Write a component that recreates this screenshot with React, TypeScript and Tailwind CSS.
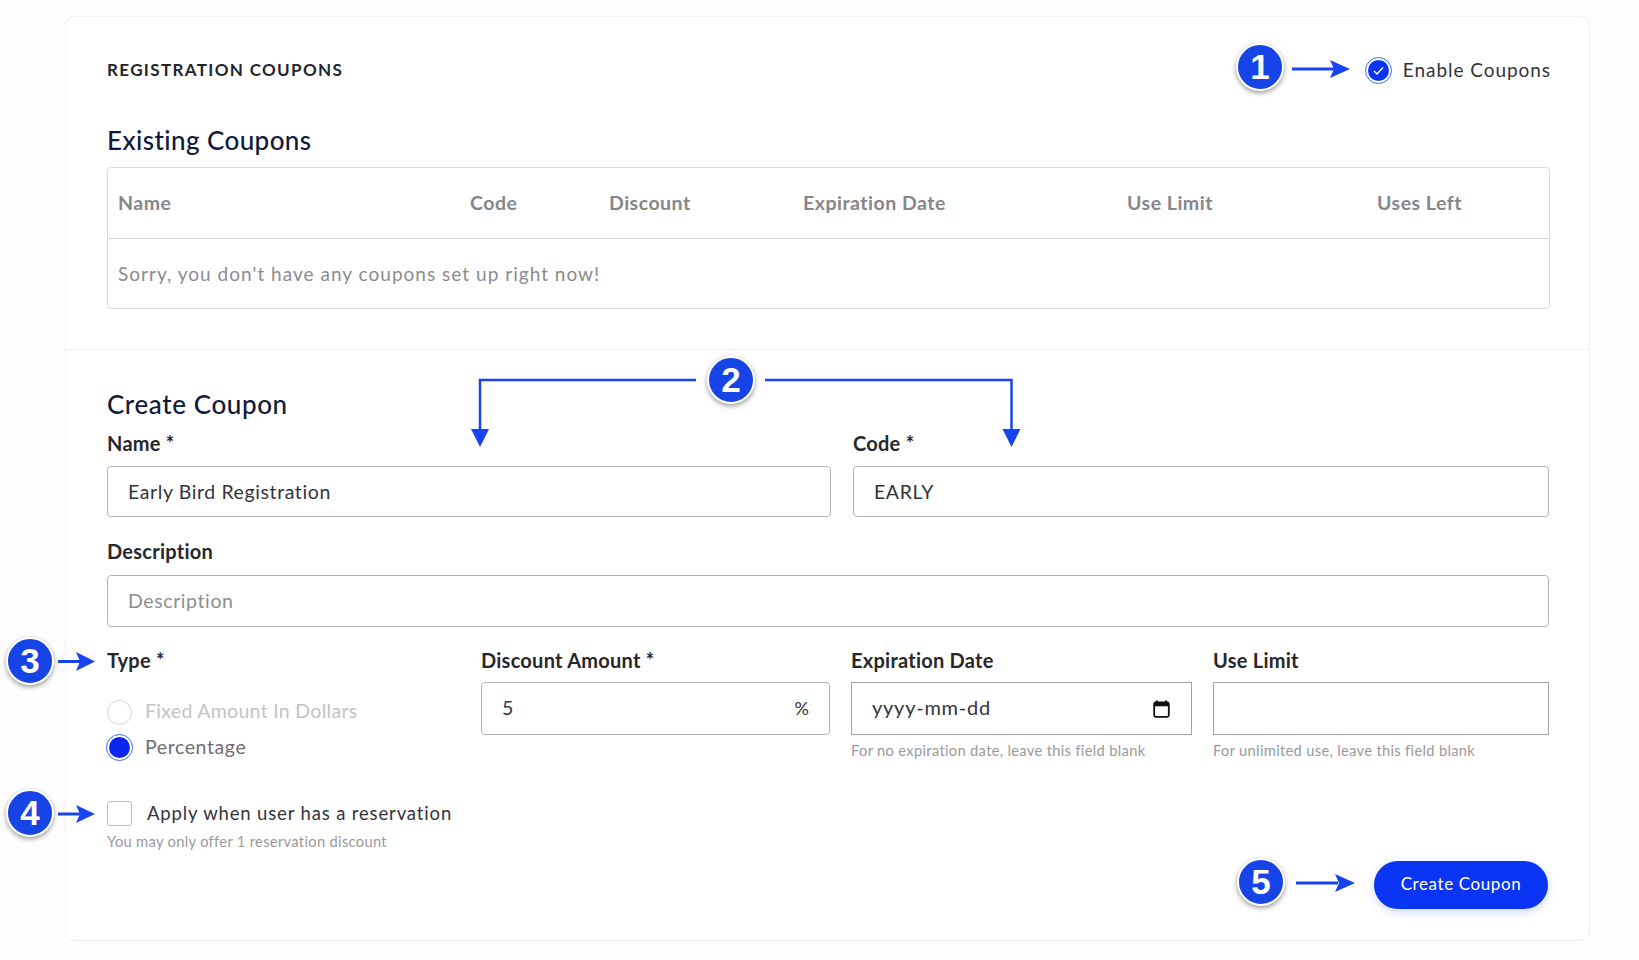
const font = "[font-family:Lato,'Open_Sans',sans-serif]";

const Badge = ({ n, className }: { n: number; className: string }) => (
  <div
    className={`absolute flex items-center justify-center w-[48px] h-[48px] rounded-full bg-[#1744e6] border-2 border-white shadow-[0_2px_5px_rgba(0,0,0,0.4)] text-white text-[35px] font-bold [font-family:'Liberation_Sans',sans-serif] ${className}`}
  >
    {n}
  </div>
);

// callout arrows sit on top of the form
const Arrows = () => (
  <svg className="absolute left-0 top-0 pointer-events-none" width="1639" height="960" fill="#1744f0" stroke="none">
    <rect x="1292" y="67.5" width="42" height="3" />
    <path d="M1330 60 L1350 69 L1330 78 L1334 69 Z" />
    <rect x="1296" y="881.5" width="42" height="3" />
    <path d="M1335 874 L1355 883 L1335 892 L1339 883 Z" />
    <rect x="58" y="660" width="22" height="3" />
    <path d="M76 652 L95 661.5 L76 671 L80 661.5 Z" />
    <rect x="58" y="812.5" width="22" height="3" />
    <path d="M76 805 L95 814 L76 823 L80 814 Z" />
    <path d="M696 380 H480 V432" fill="none" stroke="#1744f0" strokeWidth="2.5" />
    <path d="M471 429 L480 447 L489 429 Z" />
    <path d="M765 380 H1011.5 V432" fill="none" stroke="#1744f0" strokeWidth="2.5" />
    <path d="M1002.5 429 L1011.5 447 L1020.5 429 Z" />
  </svg>
);

const Label = ({ children }: { children: string }) => (
  <label className="block h-[24px] leading-[23px] text-[20px] font-bold tracking-[0.25px] text-[#26272b]">{children}</label>
);

const Help = ({ children }: { children: string }) => (
  <p className="h-[18px] leading-[18px] text-[14.7px] tracking-[0.32px] text-[#9a9a9a]">{children}</p>
);

const inputCls =
  "block w-full h-[51px] px-[20px] text-[19.5px] tracking-[0.6px] text-[#33343a] bg-white border border-[#b4b4b4] rounded-[4px] outline-none placeholder:text-[#8d8d8d]";
const squareCls =
  "block w-full h-[53px] px-[20px] pb-[3px] text-[20px] tracking-[0.75px] text-[#33343a] bg-white border border-[#a2a2a2] outline-none placeholder:text-[#33343a]";

const columns = [
  "Name",
  "Code",
  "Discount",
  "Expiration Date",
  "Use Limit",
  "Uses Left",
];

export default function App() {
  return (
    <div className={`relative w-[1639px] h-[960px] overflow-hidden bg-[#fefefe] pt-[16px] pl-[65px] ${font}`}>
      <div className="w-[1525px] h-[925px] border border-[#eff0f2] rounded-[10px] bg-white">
        {/* existing */}
        <section className="pt-[38px] pb-[40px] pl-[41px] pr-[39px] border-b border-[#f0f1f3]">
          <div className="flex items-center justify-between h-[30px]">
            <h1 className="text-[17px] font-bold tracking-[1.35px] text-[#23252b]">REGISTRATION COUPONS</h1>
            <label className="flex items-center gap-[12px] -mr-[1px] text-[19px] tracking-[0.95px] text-[#33343a]">
              <span className="flex items-center justify-center w-[25px] h-[25px] rounded-full bg-[#0a35f0] border-2 border-white outline outline-[1px] outline-[#3f66f5]">
                <svg width="13" height="13" viewBox="0 0 13 13" fill="none" stroke="white" strokeWidth="1.5">
                  <path d="M2 7 L5 10 L11 3.5" />
                </svg>
              </span>
              Enable Coupons
            </label>
          </div>
          <h2 className="mt-[39px] h-[32px] leading-[32px] text-[26px] font-medium tracking-[0.42px] text-[#101a3c]">Existing Coupons</h2>
          <div className="mt-[11px] h-[142px] border border-[#d9dadd] rounded-[4px]">
            <div className="grid grid-cols-[352px_139px_194px_324px_250px_1fr] items-center h-[71px] px-[10px] border-b border-[#d9dadd] text-[19.5px] font-bold tracking-[0.5px] text-[#85868a]">
              {columns.map((c) => (
                <div key={c}>{c}</div>
              ))}
            </div>
            <div className="flex items-center h-[69px] px-[10px] pt-[1px] text-[19px] tracking-[1.02px] text-[#8a8b8f]">
              Sorry, you don't have any coupons set up right now!
            </div>
          </div>
        </section>

        {/* create form */}
        <section className="pt-[38px] pl-[41px] pr-[40px]">
          <h2 className="h-[32px] leading-[32px] text-[26px] font-medium tracking-[0.6px] text-[#101a3c]">Create Coupon</h2>
          <div className="mt-[12px] grid grid-cols-[724px_1fr] gap-x-[22px]">
            <div>
              <Label>Name *</Label>
              <input className={`${inputCls} mt-[10px]`} defaultValue="Early Bird Registration" />
            </div>
            <div>
              <Label>Code *</Label>
              <input className={`${inputCls} mt-[10px]`} defaultValue="EARLY" />
            </div>
          </div>
          <div className="mt-[23px]">
            <Label>Description</Label>
            <input className={`${inputCls} mt-[11px] h-[52px] pb-[2px]`} placeholder="Description" />
          </div>
          <div className="mt-[22px] grid grid-cols-[353px_349px_341px_1fr] gap-x-[21px]">
            <div>
              <Label>Type *</Label>
              <div className="mt-[27px] flex items-center gap-[13px] h-[25px] leading-[22px] text-[19.5px] tracking-[0.3px] text-[#c2c3c5]">
                <span className="w-[25px] h-[25px] rounded-full border border-[#d4d5d7]" />
                <span className="-mt-[3px]">Fixed Amount In Dollars</span>
              </div>
              <div className="mt-[10px] flex items-center gap-[13px] h-[25px] leading-[22px] text-[19.5px] tracking-[0.6px] text-[#6d6e72]">
                <span className="w-[25px] h-[25px] rounded-full bg-[#0a27f0] border-2 border-white outline outline-[1px] outline-[#3f66f5]" />
                <span className="-mt-[2px]">Percentage</span>
              </div>
            </div>
            <div>
              <Label>Discount Amount *</Label>
              <div className="relative mt-[9px]">
                <input className={`${inputCls} rounded-[3px] h-[53px] pb-[2px]`} defaultValue="5" />
                <span className="absolute right-[21px] top-[13px] text-[18px] text-[#33343a]">%</span>
              </div>
            </div>
            <div>
              <Label>Expiration Date</Label>
              <div className="relative mt-[9px]">
                <input className={squareCls} placeholder="yyyy-mm-dd" />
                <svg className="absolute right-[22px] top-[18px]" width="17" height="18" viewBox="0 0 17 18" fill="none">
                  <path d="M4 0.5 V3 M13 0.5 V3" stroke="#111" strokeWidth="2" />
                  <rect x="1.2" y="2.5" width="14.6" height="14.3" rx="1.5" stroke="#111" strokeWidth="1.8" />
                  <rect x="1.2" y="2.5" width="14.6" height="3.8" fill="#111" />
                </svg>
              </div>
              <div className="mt-[6px]">
                <Help>For no expiration date, leave this field blank</Help>
              </div>
            </div>
            <div>
              <Label>Use Limit</Label>
              <input className={`${squareCls} mt-[9px]`} />
              <div className="mt-[6px]">
                <Help>For unlimited use, leave this field blank</Help>
              </div>
            </div>
          </div>
          <div className="mt-[41px] flex items-center gap-[15px] h-[25px] text-[18.5px] tracking-[0.85px] text-[#33343a]">
            <span className="w-[25px] h-[25px] rounded-[3px] border border-[#bcbcbc]" />
            Apply when user has a reservation
          </div>
          <div className="mt-[6px]">
            <Help>You may only offer 1 reservation discount</Help>
          </div>
          <div className="mt-[11px] flex justify-end pr-[1px]">
            <button className="w-[174px] h-[48px] pb-[2px] rounded-full bg-[#0a35f5] text-white text-[17px] tracking-[0.6px] shadow-[0_3px_8px_rgba(10,53,245,0.2)]">
              Create Coupon
            </button>
          </div>
        </section>
      </div>

      <Arrows />
      <Badge n={1} className="left-[1236px] top-[43px]" />
      <Badge n={2} className="left-[707px] top-[356px]" />
      <Badge n={3} className="left-[6px] top-[637px]" />
      <Badge n={4} className="left-[6px] top-[789px]" />
      <Badge n={5} className="left-[1237px] top-[858px]" />
    </div>
  );
}
